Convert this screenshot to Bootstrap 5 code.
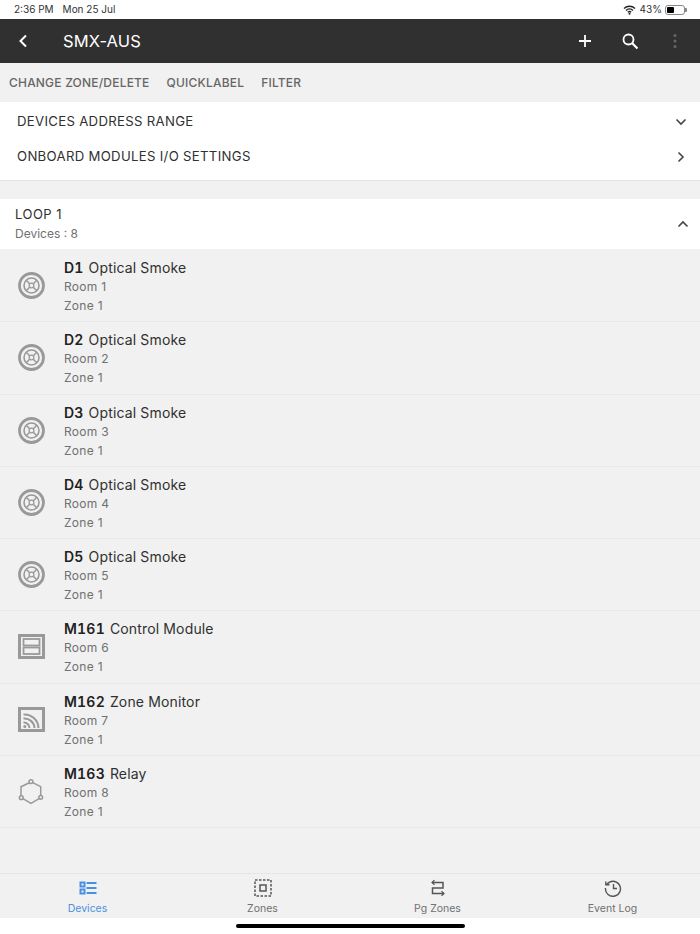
<!DOCTYPE html>
<html lang="en">
<head>
    <meta charset="UTF-8">
    <meta name="viewport" content="width=device-width, initial-scale=1.0">
    <title>SMX-AUS Devices</title>
    <link href="https://cdn.jsdelivr.net/npm/bootstrap@5.3.0/dist/css/bootstrap.min.css" rel="stylesheet">
    <script src="https://cdn.jsdelivr.net/npm/bootstrap@5.3.0/dist/js/bootstrap.bundle.min.js"></script>
    <style>
        html, body { height: 934px; overflow: hidden; }
        body { font-family: Inter, "Liberation Sans", sans-serif; background: #fff; color: #303030; }
        .shell { height: 934px; }
        .status-bar { height: 19px; padding: 0 13px 0 14px; font-size: 10px; color: #333; }
        .status-bar .dev-date { margin-left: 9px; }
        .batt { width: 20px; height: 10px; border: 1px solid #888; border-radius: 3px; padding: 1px; margin-left: 3px; }
        .batt span { display: block; width: 43%; height: 100%; background: #000; border-radius: 1px; }
        .batt-nub { width: 2px; height: 4px; background: #888; border-radius: 0 1px 1px 0; }
        .app-bar { height: 44px; background: #303030; color: #fff; padding-left: 17px; }
        .app-title { font-size: 16.5px; margin-left: 34px; letter-spacing: .1px; }
        .app-actions { gap: 25px; padding-right: 15px; }
        .action-strip { height: 39px; background: #f1f1f1; padding-left: 9px; gap: 17px; font-size: 12px; letter-spacing: .2px; font-weight: 500; color: #666; }
        .settings-panel { height: 79px; border-bottom: 1px solid #e4e4e4; padding: 2px 13px 0 17px; }
        .settings-row { height: 35.5px; font-size: 13.2px; letter-spacing: .3px; color: #303030; }
        .gap-strip { height: 18px; background: #f1f1f1; flex: none; }
        .loop-head { height: 50px; padding: 0 11px 0 15px; }
        .loop-title { font-size: 13px; letter-spacing: .5px; line-height: 19px; color: #303030; }
        .loop-sub { font-size: 12px; line-height: 19px; color: #707070; }
        .dev-list { flex: 1; background: #f1f1f1; min-height: 0; padding-top: 1px; }
        .dev-row { height: 72.25px; border-bottom: 1px solid #e8e8e8; padding-left: 18px; }
        .dev-ico { width: 27px; flex: none; margin-right: 19px; }
        .dev-text { margin-top: 2px; }
        .dev-name { font-size: 14px; letter-spacing: .15px; line-height: 19px; color: #303030; }
        .dev-name b { font-weight: 600; font-size: 14px; letter-spacing: .2px; font-variant-numeric: tabular-nums; margin-right: 5px; color: #222; }
        .dev-meta { font-size: 12px; letter-spacing: .3px; line-height: 19px; color: #707070; }
        .tab-bar { height: 45px; background: #f1f1f1; border-top: 1px solid #e6e6e6; flex: none; }
        .tab-item { width: 175px; font-size: 10.5px; color: #707070; line-height: 13px; padding-top: 5px; }
        .tab-item svg { height: 18px; margin-bottom: 5px; }
        .tab-item.is-on { color: #4a90e2; }
        .home-strip { height: 16px; flex: none; }
        .home-bar { width: 229px; height: 4px; background: #000; border-radius: 2px; margin-top: 6px; }
    </style>
</head>
<body>
    <div class="shell d-flex flex-column">
        <!-- status bar -->
        <div class="status-bar d-flex align-items-center justify-content-between">
            <div><span>2:36 PM</span><span class="dev-date">Mon 25 Jul</span></div>
            <div class="d-flex align-items-center">
                <svg width="13" height="10" viewBox="0 0 13 10" class="me-1"><path d="M1 3.5a8 8 0 0 1 11 0M3 5.5a5 5 0 0 1 7 0M4.8 7.3a2.5 2.5 0 0 1 3.4 0" fill="none" stroke="#222" stroke-width="1.4"/><circle cx="6.5" cy="8.8" r="1" fill="#222"/></svg>
                <span>43%</span>
                <div class="batt"><span></span></div>
                <div class="batt-nub"></div>
            </div>
        </div>

        <!-- app bar -->
        <div class="app-bar d-flex align-items-center">
            <svg width="12" height="14" viewBox="0 0 12 14"><path d="M9 1.5 3.5 7 9 12.500" fill="none" stroke="#fff" stroke-width="2"/></svg>
            <div class="app-title">SMX-AUS</div>
            <div class="app-actions d-flex align-items-center ms-auto">
                <svg width="20" height="20" viewBox="0 0 20 20"><path d="M10 4v12M4 10h12" stroke="#fff" stroke-width="1.800" fill="none"/></svg>
                <svg width="20" height="20" viewBox="0 0 20 20"><circle cx="8.500" cy="8.500" r="5" fill="none" stroke="#fff" stroke-width="1.800"/><path d="m12 12 5.500 5.500" stroke="#fff" stroke-width="2.200"/></svg>
                <svg width="20" height="20" viewBox="0 0 20 20"><circle cx="10" cy="4.500" r="1.500" fill="#666"/><circle cx="10" cy="10" r="1.500" fill="#666"/><circle cx="10" cy="15.500" r="1.500" fill="#666"/></svg>
            </div>
        </div>

        <!-- actions -->
        <div class="action-strip d-flex align-items-center">
            <span>CHANGE ZONE/DELETE</span><span>QUICKLABEL</span><span>FILTER</span>
        </div>

        <!-- settings rows -->
        <div class="settings-panel d-flex flex-column">
            <div class="settings-row d-flex align-items-center justify-content-between">
                <span>DEVICES ADDRESS RANGE</span>
                <svg width="12" height="12" viewBox="0 0 12 12"><path d="M1.500 3.500 6 8l4.500-4.500" fill="none" stroke="#444" stroke-width="1.600"/></svg>
            </div>
            <div class="settings-row d-flex align-items-center justify-content-between">
                <span>ONBOARD MODULES I/O SETTINGS</span>
                <svg width="12" height="12" viewBox="0 0 12 12"><path d="M3.500 1.500 8 6l-4.500 4.500" fill="none" stroke="#444" stroke-width="1.600"/></svg>
            </div>
        </div>
        <div class="gap-strip"></div>

        <!-- loop header -->
        <div class="loop-head d-flex align-items-center justify-content-between">
            <div>
                <div class="loop-title">LOOP 1</div>
                <div class="loop-sub">Devices : 8</div>
            </div>
            <svg width="12" height="12" viewBox="0 0 12 12"><path d="M1.500 8.500 6 4l4.500 4.500" fill="none" stroke="#444" stroke-width="1.600"/></svg>
        </div>

        <!-- devices, rendered from data below -->
        <div class="dev-list" id="dev-list"></div>

        <!-- tabs -->
        <div class="tab-bar d-flex">
            <div class="tab-item is-on d-flex flex-column align-items-center">
                <svg width="18" height="18" viewBox="0 0 18 18" fill="none" stroke="#4a90e2"><rect x="1.500" y="3.500" width="4" height="4" stroke-width="2"/><rect x="1.500" y="10.500" width="4" height="4" stroke-width="2"/><path d="M7.500 4H17.500M7.500 9H17.500M7.500 14H17.500" stroke-width="2"/></svg>
                <span>Devices</span>
            </div>
            <div class="tab-item d-flex flex-column align-items-center">
                <svg width="18" height="18" viewBox="0 0 18 18" fill="none" stroke="#555"><rect x="1" y="1" width="16" height="16" stroke-width="1.500" stroke-dasharray="2.500 1.500"/><rect x="6" y="6" width="6" height="6" stroke-width="1.500"/></svg>
                <span>Zones</span>
            </div>
            <div class="tab-item d-flex flex-column align-items-center">
                <svg width="16" height="18" viewBox="0 0 16 18" fill="none" stroke="#555" stroke-width="1.500"><path d="M2 3.500h11v5.500H2.500v5.500H14"/><path d="M4.500 1.300 2 3.500l2.500 2.200M11.500 12.300 14 14.500l-2.500 2.200" stroke-width="1.200"/></svg>
                <span>Pg Zones</span>
            </div>
            <div class="tab-item d-flex flex-column align-items-center">
                <svg width="18" height="18" viewBox="0 0 18 18" fill="none" stroke="#555" stroke-width="1.400"><path d="M2.800 5.500A7.500 7.500 0 1 1 1.500 9"/><path d="M1.800 2.500v3.300h3.700M9.500 5v4.500H13"/></svg>
                <span>Event Log</span>
            </div>
        </div>
        <div class="home-strip d-flex justify-content-center"><div class="home-bar"></div></div>
    </div>

    <script>
        const icons = {
            smoke: `<svg width="27" height="27" viewBox="0 0 27 27" fill="none" stroke="#999"><circle cx="13.500" cy="13.500" r="12" stroke-width="2.800"/><circle cx="13.500" cy="13.500" r="7.500" stroke-width="1.600"/><circle cx="13.500" cy="13.500" r="2.400" stroke-width="1.200"/><path d="m8 8 3.700 3.700M19 8l-3.700 3.700M8 19l3.700-3.700M19 19l-3.700-3.700" stroke-width="1.500"/></svg>`,
            module: `<svg width="27" height="25" viewBox="0 0 27 25" fill="none" stroke="#999"><rect x="1.500" y="1.500" width="24" height="22" stroke-width="3"/><rect x="5.500" y="5" width="16" height="6.500" stroke-width="1.800"/><rect x="5.500" y="13.500" width="16" height="6.500" stroke-width="1.800"/></svg>`,
            monitor: `<svg width="27" height="25" viewBox="0 0 27 25" fill="none" stroke="#999"><rect x="1.500" y="1.500" width="24" height="22" stroke-width="3"/><path d="M5.500 7.500a14 14 0 0 1 15 13.500M5.500 11.500a10 10 0 0 1 11 9.500M5.500 15.500a5.500 5.500 0 0 1 6 5.500" stroke-width="2"/><circle cx="6.800" cy="19.500" r="1.500" fill="#999" stroke="none"/></svg>`,
            relay: `<svg width="27" height="27" viewBox="0 0 27 27" fill="none" stroke="#999" stroke-width="1.500"><circle cx="13" cy="3.700" r="1.900"/><circle cx="3.300" cy="19.700" r="1.900"/><circle cx="22.700" cy="19.300" r="1.900"/><path d="M11.300 4.700 3 8.700v9M14.700 4.700l8 4v8.700M5 20.700l8 4.600 8-4.600"/></svg>`
        };
        const devices = [
            ['D1', 'Optical Smoke', 'Room 1', 'smoke'],
            ['D2', 'Optical Smoke', 'Room 2', 'smoke'],
            ['D3', 'Optical Smoke', 'Room 3', 'smoke'],
            ['D4', 'Optical Smoke', 'Room 4', 'smoke'],
            ['D5', 'Optical Smoke', 'Room 5', 'smoke'],
            ['M161', 'Control Module', 'Room 6', 'module'],
            ['M162', 'Zone Monitor', 'Room 7', 'monitor'],
            ['M163', 'Relay', 'Room 8', 'relay']
        ];
        document.getElementById('dev-list').innerHTML = devices.map(d => `
            <div class="dev-row d-flex align-items-center">
                <div class="dev-ico d-flex justify-content-center">${icons[d[3]]}</div>
                <div class="dev-text">
                    <div class="dev-name"><b>${d[0]}</b>${d[1]}</div>
                    <div class="dev-meta">${d[2]}</div>
                    <div class="dev-meta">Zone 1</div>
                </div>
            </div>`).join('');
    </script>
</body>
</html>
